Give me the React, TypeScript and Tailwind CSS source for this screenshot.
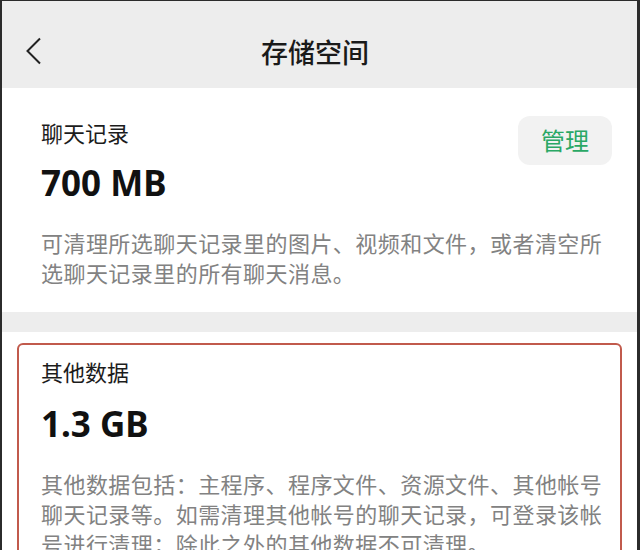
import React from "react";

const font = "font-['Noto_Sans','Noto_Sans_CJK_SC',sans-serif]";

const StorageSection = ({
  title,
  size,
  desc,
  action,
  gap = "mt-[13px]",
}: {
  title: string;
  size: string;
  desc: string;
  action?: string;
  gap?: string;
}) => {
  return (
    <div className="flex items-start justify-between">
      <div className="flex flex-col">
        <span className="text-[22px] leading-[30px] text-[#1c1c1c]">{title}</span>
        <span className={`${gap} text-[35px] leading-[44px] font-bold text-[#111]`}>
          {size}
        </span>
        <p className="mt-[23px] w-[572px] text-[22px] leading-[30px] tracking-[0.45px] text-[#828282]">
          {desc}
        </p>
      </div>
      {action && (
        <button className="absolute right-[25px] top-[115px] h-[49px] w-[94px] rounded-xl bg-[#f2f2f2] text-[24px] text-[#2aa865]">
          {action}
        </button>
      )}
    </div>
  );
};

export default function App() {
  return (
    <div
      className={`${font} relative h-[550px] w-[640px] overflow-hidden border-l-2 border-r-[3px] border-t border-[#2b2b2b] bg-white`}
    >
      <header className="grid h-[87px] grid-cols-[1fr_auto_1fr] items-center bg-[#ededed] pl-[23px] pr-[32px] pt-[12px]">
        <svg width="17" height="28" viewBox="0 0 17 28" fill="none">
          <path d="M15 1.5 L2.5 14 L15 26.5" stroke="#222" strokeWidth="2" />
        </svg>
        <h1 className="mt-[5px] text-[27px] font-medium text-[#1a1a1a]">存储空间</h1>
        <div />
      </header>

      <section className="pl-[39px] pt-[30px] pb-[24px]">
        <StorageSection
          title="聊天记录"
          size="700 MB"
          desc="可清理所选聊天记录里的图片、视频和文件，或者清空所选聊天记录里的所有聊天消息。"
          action="管理"
        />
      </section>

      <div className="h-5 bg-[#ededed]" />

      <div className="px-[15px] pt-[11px]">
        <div className="rounded-md border-2 border-[#c15a4c] pl-[22px] pt-[12px] pb-6">
          <StorageSection
            title="其他数据"
            size="1.3 GB"
            gap="mt-[15px]"
            desc="其他数据包括：主程序、程序文件、资源文件、其他帐号聊天记录等。如需清理其他帐号的聊天记录，可登录该帐号进行清理；除此之外的其他数据不可清理。"
          />
        </div>
      </div>
    </div>
  );
}
